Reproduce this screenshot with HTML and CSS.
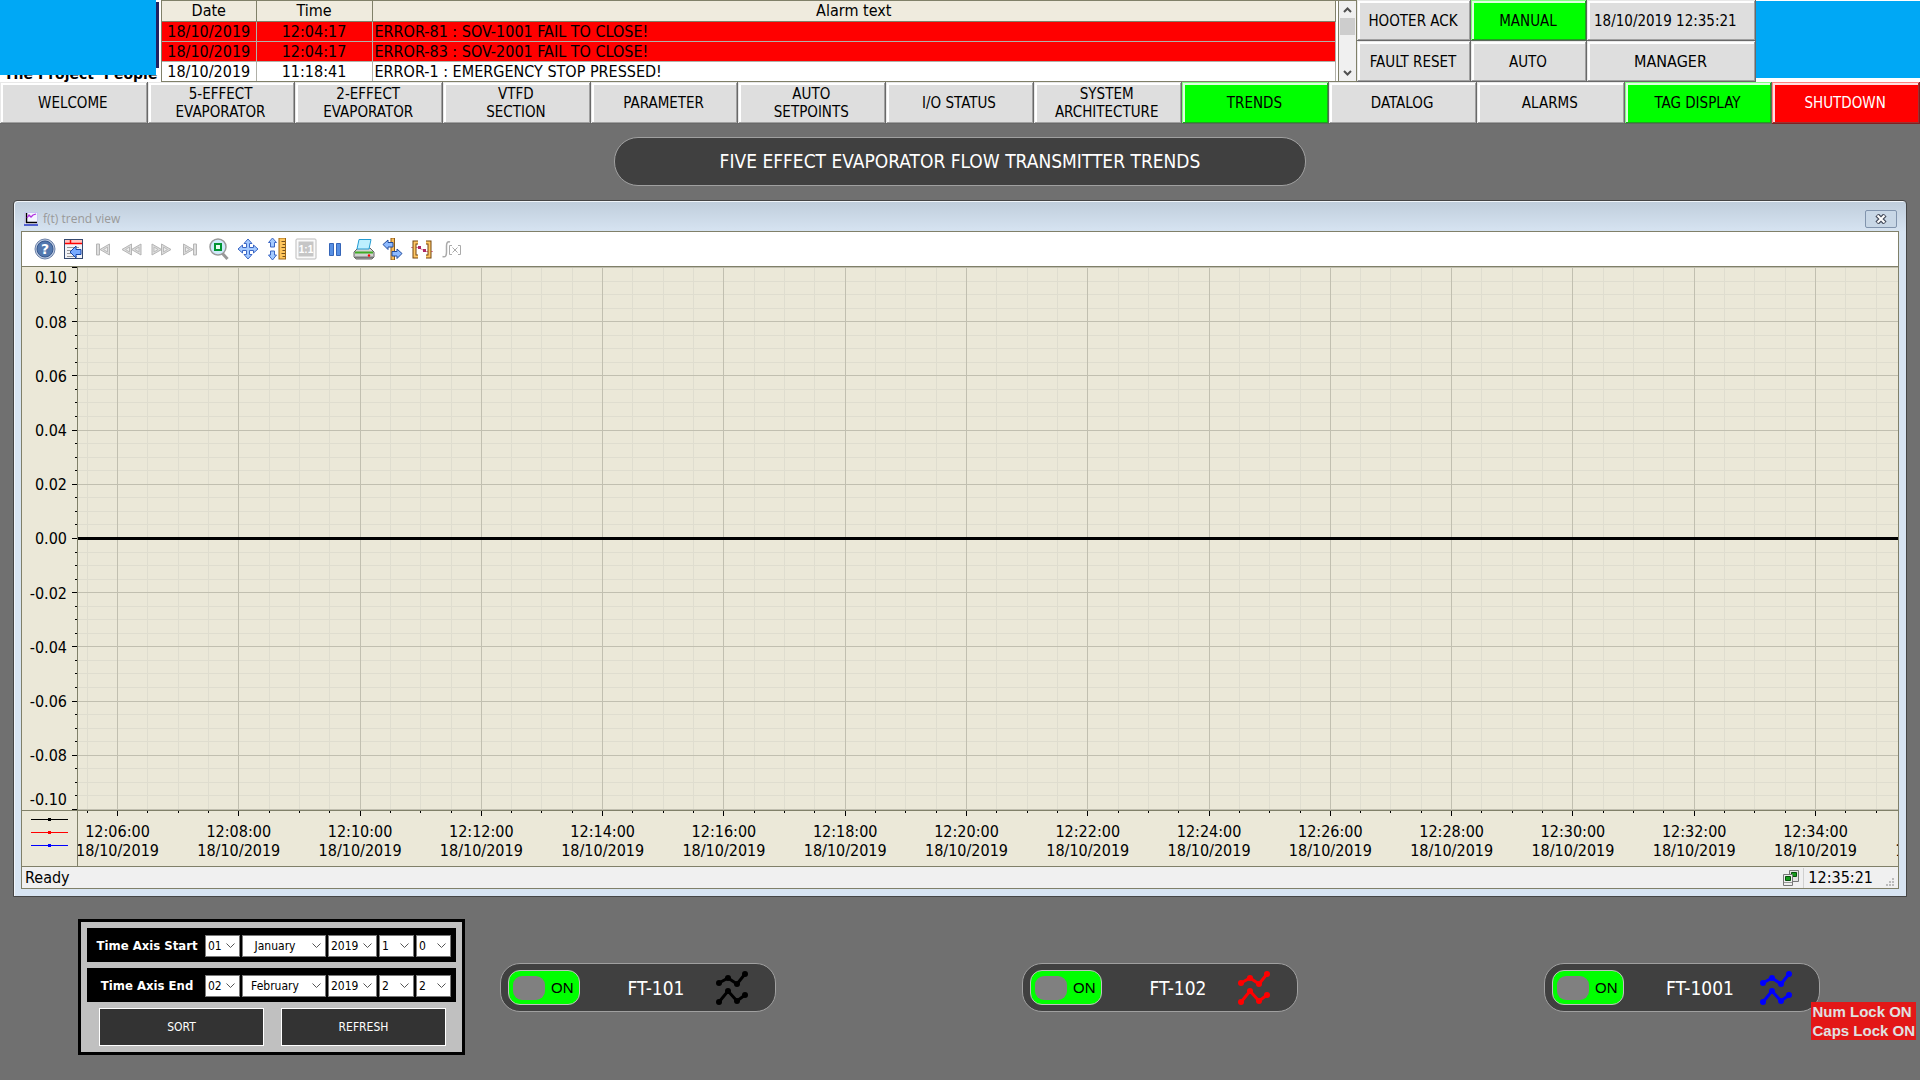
FILE: index.html
```html
<!DOCTYPE html>
<html lang="en">
<head>
<meta charset="utf-8">
<title>Five Effect Evaporator Flow Transmitter Trends</title>
<link rel="stylesheet" href="styles.css">
</head>
<body>
<header class="top">
  <div class="brand"><div class="brand-text">The Project&nbsp; People</div><div class="brand-block"></div></div>
  <div class="alarms">
    <table class="alarm-table">
      <colgroup><col class="col-date"><col class="col-time"><col></colgroup>
      <thead><tr><th>Date</th><th>Time</th><th>Alarm text</th></tr></thead>
      <tbody>
        <tr class="active"><td>18/10/2019</td><td>12:04:17</td><td>ERROR-81 : SOV-1001 FAIL TO CLOSE!</td></tr>
        <tr class="active"><td>18/10/2019</td><td>12:04:17</td><td>ERROR-83 : SOV-2001 FAIL TO CLOSE!</td></tr>
        <tr><td>18/10/2019</td><td>11:18:41</td><td>ERROR-1 : EMERGENCY STOP PRESSED!</td></tr>
      </tbody>
    </table>
    <div class="scrollbar">
      <svg width="9" height="6" viewBox="0 0 9 6"><path d="M1 5 4.500 1.500 8 5" fill="none" stroke="#505050" stroke-width="2"/></svg>
      <div class="thumb"></div>
      <svg width="9" height="6" viewBox="0 0 9 6"><path d="M1 1 4.500 4.500 8 1" fill="none" stroke="#505050" stroke-width="2"/></svg>
    </div>
  </div>
  <div class="stack"><button class="key">HOOTER ACK</button><button class="key">FAULT RESET</button></div>
  <div class="stack"><button class="key on">MANUAL</button><button class="key">AUTO</button></div>
  <div class="stack"><div class="key clock">18/10/2019 12:35:21</div><button class="key user">MANAGER</button></div>
  <div class="side-block"></div>
</header>

<nav class="nav">
  <button class="key">WELCOME</button>
  <button class="key">5-EFFECT<br>EVAPORATOR</button>
  <button class="key">2-EFFECT<br>EVAPORATOR</button>
  <button class="key">VTFD<br>SECTION</button>
  <button class="key">PARAMETER</button>
  <button class="key">AUTO<br>SETPOINTS</button>
  <button class="key">I/O STATUS</button>
  <button class="key">SYSTEM<br>ARCHITECTURE</button>
  <button class="key on">TRENDS</button>
  <button class="key">DATALOG</button>
  <button class="key">ALARMS</button>
  <button class="key on">TAG DISPLAY</button>
  <button class="key stop">SHUTDOWN</button>
</nav>

<h1 class="title">FIVE EFFECT EVAPORATOR FLOW TRANSMITTER TRENDS</h1>

<main class="window">
  <div class="titlebar">
    <svg width="14" height="14" viewBox="0 0 14 14"><rect x=".5" y=".5" width="13" height="13" fill="#f4f4ff" stroke="#c4c8ee"/><path d="M0 13h14" stroke="#5060d0" stroke-width="2"/><path d="M2.500 1v9.500H13" fill="none" stroke="#000" stroke-width="1.500"/><path d="M3 6l2-3 2 2 2-2 3-1" fill="none" stroke="#b030e0" stroke-width="1.300"/></svg>
    <span class="caption">f(t) trend view</span>
    <button class="close" aria-label="Close"><svg width="12" height="10" viewBox="0 0 12 10"><path d="M2 1 10 9M10 1 2 9" stroke="#454c5c" stroke-width="4.500"/><path d="M2.500 1.500 9.500 8.500M9.500 1.500 2.500 8.500" stroke="#fff" stroke-width="2"/></svg></button>
  </div>
  <div class="client">
    <div class="toolbar">
      <button aria-label="Help"><svg viewBox="0 0 22 22"><circle cx="11" cy="11" r="10" fill="#b9c6dc" stroke="#6d83aa"/><circle cx="11" cy="11" r="8" fill="#5378ae" stroke="#36588f"/><text x="11" y="16" text-anchor="middle" class="glyph-help">?</text></svg></button>
      <button aria-label="Configuration"><svg viewBox="0 0 22 22"><rect x="1.500" y="1.500" width="18" height="19" fill="#f2f3f7" stroke="#35496f"/><path d="M2 2h17v4H2z" fill="#ffc4c0"/><path d="M2 5.500h17M7.500 2v3" stroke="#f00" stroke-width="1.500"/><path d="M4 9.500h12M4 12.500h5M4 15.500h4M4 18.500h10" stroke="#999"/><path d="M7 14l6-6v3.500h5v5h-5V20z" fill="#78aaff" stroke="#1745a6"/></svg></button>
      <button aria-label="First record"><svg viewBox="0 0 22 22"><path d="M4.500 6h3v11h-3zM17.500 6v11L8 11.500z" fill="#ddd" stroke="#b5b5b5"/><path d="M15.500 9v5l-4-2.500z" fill="#eee" stroke="#bbb"/></svg></button>
      <button aria-label="Back"><svg viewBox="0 0 22 22"><path d="M10.500 6v11L1 11.500zM20 6v11l-9.500-5.500z" fill="#ddd" stroke="#b5b5b5"/><path d="M8.500 9v5l-4-2.500zM18 9v5l-4-2.500z" fill="#eee" stroke="#bbb"/></svg></button>
      <button aria-label="Forward"><svg viewBox="0 0 22 22"><path d="M2 6v11l9.500-5.500zM11.500 6v11l9.500-5.500z" fill="#ddd" stroke="#b5b5b5"/><path d="M4 9v5l4-2.500zM13.500 9v5l4-2.500z" fill="#eee" stroke="#bbb"/></svg></button>
      <button aria-label="Last record"><svg viewBox="0 0 22 22"><path d="M14.500 6h3v11h-3zM4.500 6v11l9.500-5.500z" fill="#ddd" stroke="#b5b5b5"/><path d="M6.500 9v5l4-2.500z" fill="#eee" stroke="#bbb"/></svg></button>
      <button aria-label="Zoom area"><svg viewBox="0 0 22 22"><path d="M14 15l5.500 6" stroke="#999" stroke-width="3"/><circle cx="10" cy="9" r="8" fill="#cfe9fa" stroke="#999" stroke-width="1.500"/><rect x="7" y="6" width="6" height="6" fill="#e8fff0" stroke="#009432" stroke-width="2"/></svg></button>
      <button aria-label="Move trend area"><svg viewBox="0 0 22 22"><path d="M11 1l4 4.500h-2.500v4h4V7L21 11l-4.500 4v-2.500h-4v4H15L11 21l-4-4.500h2.500v-4h-4V15L1 11l4.500-4v2.500h4v-4H7z" fill="#a4caff" stroke="#3b66c4"/></svg></button>
      <button aria-label="Move axes area"><svg viewBox="0 0 22 22"><path d="M6.500 0l4 4.500H8.500V9h-4V4.500h-2zM6.500 22l4-5H8.500v-4h-4v4h-2z" fill="#a4caff" stroke="#3b66c4"/><rect x="13" y="0" width="6.500" height="21" fill="#ffc65c" stroke="#9b6514"/><path d="M15.500 3.500H19M16.500 6.500H19M15.500 9.500H19M16.500 12.500H19M15.500 15.500H19M16.500 18.500H19" stroke="#76501b"/></svg></button>
      <button aria-label="Original view"><svg viewBox="0 0 22 22"><rect x="1" y="1" width="20" height="20" rx="1" fill="#fafafa" stroke="#bbb"/><rect x="3.500" y="3.500" width="15" height="15" fill="#c6c6c6"/><text x="11" y="15" text-anchor="middle" class="glyph-ratio">1:1</text></svg></button>
      <button aria-label="Pause"><svg viewBox="0 0 22 22"><path d="M5.500 5.500h4v12h-4zM12.500 5.500h4v12h-4z" fill="#5790e4" stroke="#3565b8"/></svg></button>
      <button aria-label="Print"><svg viewBox="0 0 22 22"><path d="M5 10h12l4 4v5l-2 2H3l-2-2v-5z" fill="#d2d2d2" stroke="#666"/><path d="M6 1.500h12l-2 9.500H4z" fill="#bdefff" stroke="#229bd2"/><path d="M2 14.500h18" stroke="#41ab25" stroke-width="2"/><path d="M2 19.500h18" stroke="#777" stroke-width="2"/><circle cx="16" cy="17.500" r="1.200" fill="red"/></svg></button>
      <button aria-label="Relative axis"><svg viewBox="0 0 22 22"><rect x="9" y="0" width="3.500" height="22" fill="#f8bd5a" stroke="#8d5b19"/><path d="M1 6.500L6 2v2.500h5v4.500H6v2.500zM20 15.500L15 11v2.500h-5V18h5v2.500z" fill="#8dbaff" stroke="#204b9c"/></svg></button>
      <button aria-label="Statistics area"><svg viewBox="0 0 22 22"><path d="M0 9.500h7l8 4h7" fill="none" stroke="#e3869f"/><path d="M7 4.500H3.500v14H7M15 4.500h3.500v14H15" fill="none" stroke="#72450d" stroke-width="4"/><path d="M7 4.500H3.500v14H7M15 4.500h3.500v14H15" fill="none" stroke="#ffc866" stroke-width="2"/><path d="M7 8h3v3H7zM12 11h3v3h-3z" fill="#ad2862"/></svg></button>
      <button aria-label="Calculate statistics"><svg viewBox="0 0 22 22"><path d="M10 4c-2.500-1-3.500 1-3.500 4v6c0 4-1 5.500-4 4.500" fill="none" stroke="#aaa" stroke-width="1.500"/><path d="M12 7.500h-2.500v9H12M18 7.500h2.500v9H18M12.500 9.500l5 5M17.500 9.500l-5 5" fill="none" stroke="#aaa"/></svg></button>
    </div>
    <div class="chart">
      <svg class="y-axis" id="y-axis"></svg>
      <svg class="plot" id="plot"></svg>
      <svg class="legend"><g class="s1"><path d="M9 8.500h37"/><rect x="26" y="7" width="3" height="3"/></g><g class="s2"><path d="M9 21.500h37"/><rect x="26" y="20" width="3" height="3"/></g><g class="s3"><path d="M9 34.500h37"/><rect x="26" y="33" width="3" height="3"/></g></svg>
      <svg class="x-axis" id="x-axis"></svg>
    </div>
    <div class="status">
      <span class="ready">Ready</span>
      <svg width="16" height="16" viewBox="0 0 16 16"><path d="M6.500.5h9v11h-9z" fill="#e4e4e4" stroke="#777"/><path d="M8.500 2.500h5v4h-5z" fill="#169b1d" stroke="#064f0b"/><path d="M.5 4.500h9v11h-9z" fill="#eee" stroke="#777"/><path d="M2.500 6.500h5v4h-5z" fill="#169b1d" stroke="#064f0b"/><path d="M1 12.500h8" stroke="#999"/></svg>
      <span class="status-time">12:35:21</span>
      <svg class="grip" width="8" height="8" viewBox="0 0 8 8"><path d="M6 0h2v2H6zM3 3h2v2H3zM6 3h2v2H6zM0 6h2v2H0zM3 6h2v2H3zM6 6h2v2H6z" fill="#bbb"/></svg>
    </div>
  </div>
</main>

<footer class="bottom">
  <form class="range">
    <div class="range-row" role="group" aria-labelledby="range-start">
      <span class="range-label" id="range-start">Time Axis Start</span>
      <select class="w-s" aria-label="Start day"><option>01</option></select>
      <select class="w-l" aria-label="Start month"><option>January</option></select>
      <select class="w-m" aria-label="Start year"><option>2019</option></select>
      <select class="w-s" aria-label="Start hour"><option>1</option></select>
      <select class="w-s" aria-label="Start minute"><option>0</option></select>
    </div>
    <div class="range-row" role="group" aria-labelledby="range-end">
      <span class="range-label" id="range-end">Time Axis End</span>
      <select class="w-s" aria-label="End day"><option>02</option></select>
      <select class="w-l" aria-label="End month"><option>February</option></select>
      <select class="w-m" aria-label="End year"><option>2019</option></select>
      <select class="w-s" aria-label="End hour"><option>2</option></select>
      <select class="w-s" aria-label="End minute"><option>2</option></select>
    </div>
    <div class="range-actions"><button type="button">SORT</button><button type="button">REFRESH</button></div>
  </form>
  <div class="pens">
    <div class="pen s1">
      <label class="toggle"><input type="checkbox" checked aria-label="FT-101">ON</label>
      <span class="pen-name">FT-101</span>
      <svg width="32" height="36" viewBox="0 0 32 36"><path d="M3 13 12 8 21 14 29 4M3 32 12 21 21 31 29 25"/><circle cx="3" cy="13" r="3"/><circle cx="12" cy="8" r="3"/><circle cx="21" cy="14" r="3"/><circle cx="29" cy="4" r="3"/><circle cx="3" cy="32" r="3"/><circle cx="12" cy="21" r="3"/><circle cx="21" cy="31" r="3"/><circle cx="29" cy="25" r="3"/></svg>
    </div>
    <div class="pen s2">
      <label class="toggle"><input type="checkbox" checked aria-label="FT-102">ON</label>
      <span class="pen-name">FT-102</span>
      <svg width="32" height="36" viewBox="0 0 32 36"><path d="M3 13 12 8 21 14 29 4M3 32 12 21 21 31 29 25"/><circle cx="3" cy="13" r="3"/><circle cx="12" cy="8" r="3"/><circle cx="21" cy="14" r="3"/><circle cx="29" cy="4" r="3"/><circle cx="3" cy="32" r="3"/><circle cx="12" cy="21" r="3"/><circle cx="21" cy="31" r="3"/><circle cx="29" cy="25" r="3"/></svg>
    </div>
    <div class="pen s3">
      <label class="toggle"><input type="checkbox" checked aria-label="FT-1001">ON</label>
      <span class="pen-name">FT-1001</span>
      <svg width="32" height="36" viewBox="0 0 32 36"><path d="M3 13 12 8 21 14 29 4M3 32 12 21 21 31 29 25"/><circle cx="3" cy="13" r="3"/><circle cx="12" cy="8" r="3"/><circle cx="21" cy="14" r="3"/><circle cx="29" cy="4" r="3"/><circle cx="3" cy="32" r="3"/><circle cx="12" cy="21" r="3"/><circle cx="21" cy="31" r="3"/><circle cx="29" cy="25" r="3"/></svg>
    </div>
  </div>
</footer>
<div class="locks">Num Lock ON<br>Caps Lock ON</div>
<script src="chart.js"></script>
</body>
</html>
```
FILE: styles.css
```css
* { box-sizing: border-box; }

body {
  margin: 0;
  min-height: 100vh;
  display: flex;
  flex-direction: column;
  background: #707070;
  color: #000;
  font: 16px/20px "DejaVu Sans Condensed", "DejaVu Sans", sans-serif;
  position: relative;
}

button, select, input { font: inherit; color: inherit; margin: 0; }
svg { display: block; flex: none; }

/* header */
.top {
  display: grid;
  grid-template-columns: 161fr 1196fr 114fr 116fr 169fr 164fr;
  height: 82px;
  background: #fff;
}
.brand { position: relative; border-right: 2px solid #fff; overflow: hidden; display: flex; align-items: flex-end; }
.brand-text { font: bold 14px/16px "DejaVu Sans", sans-serif; white-space: nowrap; padding-left: 4px; }
.brand-block { position: absolute; inset: 0 0 7px 0; background: linear-gradient(#202060, #202060) right 2px / 3px 66px no-repeat, linear-gradient(90deg, #00a8f5 calc(100% - 3px), #fff 0); }

.alarms { display: flex; border: 1px solid #808069; overflow: hidden; background: #fff; }
.alarm-table { flex: 1; table-layout: fixed; border-collapse: collapse; height: 80px; margin-right: 2px; }
.col-date { width: 94px; }
.col-time { width: 116px; }
.alarm-table th, .alarm-table td { height: 20px; padding: 0; line-height: 19px; font-size: 16px; font-weight: normal; text-align: center; border-right: 1px solid #b0b0a8; border-bottom: 1px solid #b0b0a8; white-space: nowrap; }
.alarm-table th { background: #efebde; border-color: #808069; }
.alarm-table td:last-child { text-align: left; padding-left: 2px; }
.alarm-table .active td { background: #f00; }
.scrollbar { width: 18px; background: #f0f0f0; border-left: 1px solid #808069; display: flex; flex-direction: column; align-items: center; padding: 6px 0 5px; }
.thumb { width: 15px; height: 17px; margin: 5px 0 auto; background: #cdcdcd; }

.key {
  display: flex;
  align-items: center;
  justify-content: center;
  min-width: 0;
  border: 0;
  border-radius: 0;
  padding: 0 2px 0 0;
  background: #dedede;
  font-size: 15px;
  line-height: 18px;
  text-align: center;
  white-space: nowrap;
  box-shadow: inset -1px -1px #696969, inset 1px 1px #e8e8e8, inset -2px -2px #a0a0a0, inset 3px 3px #fff;
}
.key.on { background: #0f0; box-shadow: inset -1px -1px #596959, inset 1px 1px #80ff80, inset -2px -2px #20a020, inset 3px 3px #e0ffe0; }
.key.stop { background: #f00; color: #fff; box-shadow: inset -1px -1px #802020, inset 1px 1px #ff8080, inset -2px -2px #a03030, inset 3px 3px #ffe0e0; }
.stack { display: grid; grid-template-rows: 1fr 1fr; }
.key.clock { justify-content: flex-start; padding-left: 7px; }
.key.user { font-size: 16px; }
.side-block { background: #00a8f5; margin: 1px 0 4px; }

.nav { display: grid; grid-template-columns: repeat(13, 1fr); height: 42px; }

.title {
  align-self: center;
  width: 36%;
  min-width: 560px;
  margin: 13px 0 14px;
  border: 1px solid #a0a0a0;
  border-radius: 24px;
  background: #404040;
  color: #fff;
  font-size: 19px;
  font-weight: normal;
  line-height: 47px;
  text-align: center;
}

/* trend window */
.window {
  flex: 1;
  display: flex;
  flex-direction: column;
  margin: 0 13px;
  padding: 0 7px 7px;
  border: 1px solid #454545;
  border-radius: 4px 4px 0 0;
  background: linear-gradient(#bfcddb, #d7e4f2 31px);
  box-shadow: inset 1px 1px #f0f5fa;
}
.titlebar { display: flex; align-items: center; height: 30px; padding: 6px 2px 0 3px; }
.caption { margin-left: 5px; color: #999; font: 12px/16px "Open Sans", sans-serif; }
.close { margin-left: auto; width: 32px; height: 18px; padding: 0; display: grid; place-items: center; background: #c8d7e6; border: 1px solid #8194ad; border-radius: 2px; }
.client { flex: 1; display: flex; flex-direction: column; border: 1px solid #808069; }
.toolbar { display: flex; height: 35px; padding: 0 8px; background: #fff; border-bottom: 1px solid #808069; }
.toolbar button { width: 29px; padding: 0; border: 0; background: none; display: grid; place-items: center; }
.toolbar svg { width: 22px; height: 22px; }
.glyph-help { font: bold 14px "DejaVu Sans", sans-serif; fill: #fff; }
.glyph-ratio { font: bold 10px "Liberation Sans", sans-serif; fill: #fff; }

.chart { flex: 1; display: grid; grid-template-columns: 56px 1fr; grid-template-rows: 1fr 56px; background: #ebe8d8; border-bottom: 1px solid #808069; }
.chart svg { width: 100%; height: 100%; shape-rendering: crispEdges; min-height: 0; }
.y-axis, .legend { border-right: 1px solid #808069; }
.legend, .x-axis { border-top: 1px solid #808069; overflow: hidden; }
.y-axis { overflow: visible; }
.minor { stroke: #dfddcf; }
.major { stroke: #c1bfb0; }
.tick { stroke: #000; }
.trace { stroke: #000; stroke-width: 3px; }
.legend path { stroke: currentColor; }
.legend rect { fill: currentColor; }
.s1 { color: #000; }
.s2 { color: #f00; }
.s3 { color: #00f; }
.status { display: flex; align-items: center; height: 21px; background: #f0f0f0; padding: 0 4px 0 3px; }
.ready { margin-right: auto; }
.status-time { margin-left: 4px; padding: 0 13px 0 4px; border-left: 1px solid #d0d0d0; }
.grip { align-self: flex-end; margin-bottom: 2px; }

/* bottom controls */
.bottom { display: flex; align-items: flex-start; padding: 22px 100px 25px 78px; }
.range { width: 387px; padding: 6px; border: 3px solid #000; background: silver; display: flex; flex-direction: column; gap: 6px; }
.range-row { display: flex; gap: 2px; align-items: center; height: 34px; padding: 2px 5px 0 4px; background: #000; }
.range-label { flex: 1; color: #fff; font-size: 13px; font-weight: bold; text-align: center; white-space: nowrap; }
.range select {
  appearance: none;
  height: 22px;
  padding: 0 0 0 4px;
  border: 1px solid #7a7a7a;
  border-radius: 0;
  font-size: 12px;
  line-height: 20px;
  background: #fff url("data:image/svg+xml,%3Csvg xmlns='http://www.w3.org/2000/svg' width='9' height='6'%3E%3Cpath d='M.5.5l4 4 4-4' fill='none' stroke='%23555'/%3E%3C/svg%3E") right 4px center no-repeat;
}
.range .w-s { width: 35px; padding-left: 2px; }
.range .w-m { width: 49px; padding-left: 2px; }
.range .w-l { width: 84px; padding: 0 18px 0 0; text-align: center; text-align-last: center; }
.range-actions { display: flex; gap: 17px; padding: 0 10px 0 12px; }
.range-actions button { flex: 1; height: 38px; border: 1px solid #fff; background: #333; color: #fff; font-size: 12px; padding: 0; }

.pens { flex: 1; display: flex; justify-content: space-between; margin: 44px 0 0 35px; }
.pen { display: flex; align-items: center; width: 276px; height: 49px; padding: 0 27px 0 7px; border: 1px solid #a0a0a0; border-radius: 20px; background: #404040; }
.toggle { display: flex; align-items: center; gap: 6px; width: 72px; height: 35px; padding-left: 4px; border: 1px solid #c0c0c0; border-radius: 12px; background: #0f0; color: #000; font: 15px/20px "Liberation Sans", sans-serif; }
.toggle input { appearance: none; width: 32px; height: 24px; border-radius: 9px; background: #808080; }
.pen-name { flex: 1; padding-left: 16px; text-align: center; color: #fff; font-size: 19px; }
.pen svg { fill: currentColor; }
.pen path { fill: none; stroke: currentColor; stroke-width: 3px; }

.locks { position: absolute; right: 4px; bottom: 40px; padding: 0 1px; background: #e31717; color: #e0e0e0; font: bold 15px/19px "Liberation Sans", sans-serif; white-space: nowrap; }
```
FILE: chart.js
```js
const NS = "http://www.w3.org/2000/svg";
const DAY = "18/10/2019";

function add(parent, name, attrs, text) {
  const el = document.createElementNS(NS, name);
  for (const key in attrs) el.setAttribute(key, attrs[key]);
  if (text) el.textContent = text;
  parent.appendChild(el);
}

const plot = document.getElementById("plot");
const yAxis = document.getElementById("y-axis");
const xAxis = document.getElementById("x-axis");

const lines = { minor: [], major: [] };

// 0.10 down to -0.10 in steps of 0.005
for (let i = 0; i <= 40; i++) {
  const isMajor = i % 4 === 0;
  const y = (i * 2.495 + 0.09).toFixed(2) + "%";
  lines[isMajor ? "major" : "minor"].push({ x1: 0, x2: "100%", y1: y, y2: y });
  add(yAxis, "line", { x1: isMajor ? 50 : 53, x2: 55, y1: y, y2: y, class: "tick" });
  if (isMajor) {
    const dy = i === 0 ? 16 : i === 40 ? -4 : 6;
    add(yAxis, "text", { x: 45, y: y, dy: dy, "text-anchor": "end" }, (0.1 - i * 0.005).toFixed(2).replace("-0.00", "0.00"));
  }
}

// half-minute ticks from 12:05:30, labelled every two minutes
const first = 2.17;
const step = 6.664;
for (let i = -1; i <= 60; i++) {
  const isMajor = i % 4 === 0;
  const x = (first + i * step / 4).toFixed(3) + "%";
  lines[isMajor ? "major" : "minor"].push({ y1: 0, y2: "100%", x1: x, x2: x });
  add(xAxis, "line", { y1: 0, y2: isMajor ? 5 : 2, x1: x, x2: x, class: "tick" });
  if (isMajor) {
    const minute = String(6 + i / 2).padStart(2, "0");
    add(xAxis, "text", { x: x, y: 26, "text-anchor": "middle" }, "12:" + minute + ":00");
    add(xAxis, "text", { x: x, y: 45, "text-anchor": "middle" }, DAY);
  }
}

for (const kind of ["minor", "major"]) {
  for (const line of lines[kind]) add(plot, "line", { ...line, class: kind });
}
add(plot, "line", { x1: 0, x2: "100%", y1: "50%", y2: "50%", class: "trace" });
```
